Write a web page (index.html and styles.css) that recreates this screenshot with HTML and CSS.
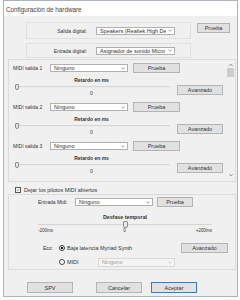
FILE: index.html
```html
<!DOCTYPE html>
<html lang="es">
<head>
  <meta charset="UTF-8">
  <meta name="viewport" content="width=device-width, initial-scale=1.0">
  <title>Configuración de hardware</title>
  <link rel="stylesheet" href="styles.css">
</head>
<body>
  <div class="window">
    <div class="titlebar">Configuración de hardware</div>

    <div class="content">

      <!-- audio digital -->
      <div class="digital-row first">
        <div class="digital-box">
          <span class="digital-label">Salida digital:</span>
          <div class="combo combo-digital"><span>Speakers (Realtek High De</span><svg class="arrow" viewBox="0 0 4 3"><path d="M0.5 0.8 L2 2.2 L3.5 0.8"/></svg></div>
        </div>
        <button class="btn btn-digital">Prueba</button>
      </div>

      <div class="digital-row second">
        <div class="digital-box small">
          <span class="digital-label">Entrada digital:</span>
          <div class="combo combo-digital"><span>Asignador de sonido Micro</span><svg class="arrow" viewBox="0 0 4 3"><path d="M0.5 0.8 L2 2.2 L3.5 0.8"/></svg></div>
        </div>
      </div>

      <!-- salidas midi -->
      <div class="midi-group">
        <div class="midi-list">

          <div class="midi-block">
            <div class="midi-row">
              <span class="midi-label">MIDI salida 1</span>
              <div class="combo combo-midi"><span>Ninguno</span><svg class="arrow" viewBox="0 0 4 3"><path d="M0.5 0.8 L2 2.2 L3.5 0.8"/></svg></div>
              <button class="btn btn-midi">Prueba</button>
            </div>
            <div class="delay">
              <div class="delay-main">
                <div class="delay-title">Retardo en ms</div>
                <div class="slider"><span class="track"></span><span class="thumb"></span></div>
                <div class="delay-value">0</div>
              </div>
              <button class="btn btn-advanced">Avanzado</button>
            </div>
          </div>

          <div class="midi-block">
            <div class="midi-row">
              <span class="midi-label">MIDI salida 2</span>
              <div class="combo combo-midi"><span>Ninguno</span><svg class="arrow" viewBox="0 0 4 3"><path d="M0.5 0.8 L2 2.2 L3.5 0.8"/></svg></div>
              <button class="btn btn-midi">Prueba</button>
            </div>
            <div class="delay">
              <div class="delay-main">
                <div class="delay-title">Retardo en ms</div>
                <div class="slider"><span class="track"></span><span class="thumb"></span></div>
                <div class="delay-value">0</div>
              </div>
              <button class="btn btn-advanced">Avanzado</button>
            </div>
          </div>

          <div class="midi-block">
            <div class="midi-row">
              <span class="midi-label">MIDI salida 3</span>
              <div class="combo combo-midi"><span>Ninguno</span><svg class="arrow" viewBox="0 0 4 3"><path d="M0.5 0.8 L2 2.2 L3.5 0.8"/></svg></div>
              <button class="btn btn-midi">Prueba</button>
            </div>
            <div class="delay">
              <div class="delay-main">
                <div class="delay-title">Retardo en ms</div>
                <div class="slider"><span class="track"></span><span class="thumb"></span></div>
                <div class="delay-value">0</div>
              </div>
              <button class="btn btn-advanced">Avanzado</button>
            </div>
          </div>

        </div>

        <div class="scrollbar">
          <svg class="scroll-arrow" viewBox="0 0 6 6"><path d="M1.5 3.8 L3 2.3 L4.5 3.8"/></svg>
          <div class="scroll-thumb"></div>
          <div class="scroll-space"></div>
          <svg class="scroll-arrow" viewBox="0 0 6 6"><path d="M1.5 2.3 L3 3.8 L4.5 2.3"/></svg>
        </div>
      </div>

      <div class="keep-open">
        <span class="checkbox"><svg viewBox="0 0 6 6"><path d="M1.3 3.1 L2.5 4.3 L4.8 1.7"/></svg></span>
        <span>Dejar los pilotos MIDI abiertos</span>
      </div>

      <!-- entrada midi -->
      <div class="input-group">
        <div class="input-row">
          <span class="input-label">Entrada Midi:</span>
          <div class="combo combo-midi"><span>Ninguno</span><svg class="arrow" viewBox="0 0 4 3"><path d="M0.5 0.8 L2 2.2 L3.5 0.8"/></svg></div>
          <button class="btn btn-input">Prueba</button>
        </div>

        <div class="offset-title">Desfase temporal</div>
        <div class="offset-slider">
          <div class="slider wide"><span class="track"></span><span class="thumb middle"></span></div>
          <div class="ticks"><span>-200ms</span><span>0</span><span>+200ms</span></div>
        </div>

        <div class="eco-row">
          <span class="eco-label">Eco:</span>
          <span class="radio checked"></span>
          <span class="eco-text">Baja latencia Myriad Synth</span>
          <button class="btn btn-eco">Avanzado</button>
        </div>
        <div class="eco-row second">
          <span class="radio"></span>
          <span class="eco-text midi">MIDI</span>
          <div class="combo combo-disabled"><span>Ninguno</span><svg class="arrow" viewBox="0 0 4 3"><path d="M0.5 0.8 L2 2.2 L3.5 0.8"/></svg></div>
        </div>
      </div>

      <div class="footer">
        <button class="btn btn-footer">SPV</button>
        <button class="btn btn-footer cancel">Cancelar</button>
        <button class="btn btn-footer default">Aceptar</button>
      </div>

    </div>
  </div>
</body>
</html>
```

FILE: styles.css
```css
body{
  margin: 0;
  background-color: #ffffff;
  font-family: "Liberation Sans", Arial, sans-serif;
  font-size: 5.5px;
  color: #333333;
}

.window{
  margin-left: 3px;
  width: 235px;
  height: 297px;
  box-sizing: border-box;
  border: 1px solid #aab4bf;
  background-color: #f0f0f0;
  display: flex;
  flex-direction: column;
}

.titlebar{
  height: 13px;
  padding-top: 2px;
  padding-left: 2px;
  line-height: 13px;
  font-size: 6.3px;
  background-color: #ffffff;
  color: #444444;
}

.content{
  flex: 1;
  display: flex;
  flex-direction: column;
}

/* common controls */

.btn{
  font: inherit;
  color: inherit;
  padding: 0;
  margin: 0;
  background-color: #e1e1e1;
  border: 1px solid #b4b4b4;
  box-sizing: border-box;
}

.combo{
  display: flex;
  align-items: center;
  justify-content: space-between;
  box-sizing: border-box;
  height: 8px;
  padding: 0 2px 0 3px;
  background-color: #ffffff;
  border: 1px solid #b0b0b0;
  white-space: nowrap;
  overflow: hidden;
}

.combo span{
  overflow: hidden;
}

.arrow{
  flex: none;
  width: 4px;
  height: 3px;
  margin-left: 2px;
}

.arrow path{
  fill: none;
  stroke: #707070;
  stroke-width: 0.7;
}

/* digital */

.digital-row{
  display: flex;
  padding-left: 22px;
}

.digital-row.first{
  margin-top: 6px;
}

.digital-row.second{
  margin-top: 4px;
}

.digital-box{
  width: 165px;
  height: 17px;
  box-sizing: border-box;
  border: 1px solid #e0e0e0;
  display: flex;
  align-items: center;
}

.digital-box.small{
  height: 15px;
}

.digital-label{
  width: 60px;
  text-align: right;
  font-size: 5px;
}

.combo-digital{
  width: 79px;
  margin-left: 9px;
}

.btn-digital{
  width: 33px;
  height: 10px;
  margin-left: 6px;
  margin-top: 1px;
}

/* midi outputs */

.midi-group{
  margin: 1px 0 0 4px;
  width: 228px;
  height: 123px;
  box-sizing: border-box;
  border: 1px solid #dcdcdc;
  display: flex;
}

.midi-list{
  width: 217px;
  padding-top: 3px;
  padding-left: 4px;
  box-sizing: border-box;
  overflow: hidden;
}

.midi-block{
  margin-bottom: 6px;
}

.midi-row{
  display: flex;
  align-items: center;
  height: 10px;
}

.midi-label{
  width: 37px;
  font-size: 5px;
}

.combo-midi{
  width: 78px;
}

.btn-midi{
  width: 47px;
  height: 10px;
  margin-left: 5px;
}

.delay{
  display: flex;
}

.delay-main{
  width: 157px;
}

.delay-title{
  margin-top: 4px;
  height: 6px;
  line-height: 6px;
  text-align: center;
  font-weight: bold;
  font-size: 5px;
}

.slider{
  position: relative;
  height: 7px;
}

.track{
  position: absolute;
  left: 2px;
  right: 0;
  top: 3px;
  height: 1px;
  background-color: #d6d6d6;
  border-bottom: 1px solid #ececec;
}

.thumb{
  position: absolute;
  left: 2px;
  top: 1px;
  width: 4px;
  height: 6px;
  box-sizing: border-box;
  border: 1px solid #8c8c8c;
  border-radius: 1px 1px 2px 2px;
  background-color: #e8e8e8;
}

.delay-value{
  height: 6px;
  line-height: 6px;
  text-align: center;
  font-size: 5px;
}

.btn-advanced{
  width: 46px;
  height: 10px;
  margin-top: 12px;
  margin-left: 7px;
}

.scrollbar{
  width: 9px;
  display: flex;
  flex-direction: column;
  align-items: center;
  padding: 2px 0 3px;
  box-sizing: border-box;
}

.scroll-arrow{
  width: 6px;
  height: 6px;
  flex: none;
}

.scroll-arrow path{
  fill: none;
  stroke: #606060;
  stroke-width: 0.8;
}

.scroll-thumb{
  width: 7px;
  height: 9px;
  background-color: #cdcdcd;
}

.scroll-space{
  flex: 1;
}

/* checkbox */

.keep-open{
  display: flex;
  align-items: center;
  height: 7px;
  margin: 4px 0 1px 11px;
  gap: 3px;
}

.checkbox{
  width: 6px;
  height: 6px;
  box-sizing: border-box;
  border: 1px solid #555555;
  background-color: #ffffff;
  display: flex;
}

.checkbox svg{
  width: 4px;
  height: 4px;
}

.checkbox path{
  fill: none;
  stroke: #222222;
  stroke-width: 0.8;
}

/* midi input */

.input-group{
  margin-left: 4px;
  width: 228px;
  height: 76px;
  box-sizing: border-box;
  border: 1px solid #dcdcdc;
  padding-left: 29px;
}

.input-row{
  display: flex;
  align-items: center;
  height: 10px;
  margin-top: 2px;
}

.input-label{
  width: 37px;
  font-size: 5px;
}

.btn-input{
  width: 36px;
  height: 10px;
  margin-left: 4px;
}

.offset-title{
  width: 174px;
  margin-top: 7px;
  height: 6px;
  line-height: 6px;
  text-align: center;
  font-weight: bold;
  font-size: 5.3px;
}

.offset-slider{
  width: 174px;
}

.slider.wide{
  height: 8px;
}

.slider.wide .track{
  left: 0;
  top: 4px;
}

.thumb.middle{
  left: 85px;
  top: 1px;
  width: 5px;
  height: 7px;
}

.ticks{
  display: flex;
  justify-content: space-between;
  height: 5px;
  line-height: 5px;
  font-size: 4.5px;
}

.eco-row{
  display: flex;
  align-items: center;
  height: 10px;
  margin-top: 10px;
  padding-left: 5px;
}

.eco-row.second{
  margin-top: 4px;
  padding-left: 21px;
}

.eco-label{
  width: 16px;
  font-size: 5px;
}

.radio{
  width: 6px;
  height: 6px;
  box-sizing: border-box;
  border: 1px solid #444444;
  border-radius: 50%;
  background-color: #ffffff;
  flex: none;
}

.radio.checked{
  background: radial-gradient(circle, #222222 0 1.4px, #ffffff 1.6px);
}

.eco-text{
  margin-left: 2px;
}

.eco-text.midi{
  width: 31px;
}

.btn-eco{
  width: 47px;
  height: 10px;
  margin-left: auto;
  margin-right: 7px;
}

.combo-disabled{
  width: 77px;
  height: 9px;
  color: #a0a0a0;
  border-color: #d8d8d8;
  background-color: #f4f4f4;
}

.combo-disabled .arrow path{
  stroke: #b8b8b8;
}

/* footer */

.footer{
  display: flex;
  margin-top: 12px;
  padding-left: 23px;
}

.btn-footer{
  width: 46px;
  height: 11px;
}

.btn-footer.cancel{
  margin-left: 23px;
}

.btn-footer.default{
  margin-left: 9px;
  border-color: #2f7fd6;
}
```
